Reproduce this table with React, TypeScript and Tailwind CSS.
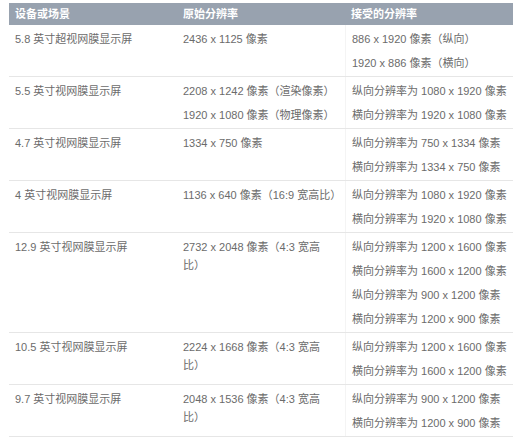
const rows = [
  {
    device: "5.8 英寸超视网膜显示屏",
    native: ["2436 x 1125 像素"],
    accepted: ["886 x 1920 像素（纵向）", "1920 x 886 像素（横向）"],
  },
  {
    device: "5.5 英寸视网膜显示屏",
    native: ["2208 x 1242 像素（渲染像素）", "1920 x 1080 像素（物理像素）"],
    accepted: ["纵向分辨率为 1080 x 1920 像素", "横向分辨率为 1920 x 1080 像素"],
    nativeAsRows: true,
  },
  {
    device: "4.7 英寸视网膜显示屏",
    native: ["1334 x 750 像素"],
    accepted: ["纵向分辨率为 750 x 1334 像素", "横向分辨率为 1334 x 750 像素"],
  },
  {
    device: "4 英寸视网膜显示屏",
    native: ["1136 x 640 像素（16:9 宽高比）"],
    accepted: ["纵向分辨率为 1080 x 1920 像素", "横向分辨率为 1920 x 1080 像素"],
  },
  {
    device: "12.9 英寸视网膜显示屏",
    native: ["2732 x 2048 像素（4:3 宽高", "比）"],
    accepted: [
      "纵向分辨率为 1200 x 1600 像素",
      "横向分辨率为 1600 x 1200 像素",
      "纵向分辨率为 900 x 1200 像素",
      "横向分辨率为 1200 x 900 像素",
    ],
  },
  {
    device: "10.5 英寸视网膜显示屏",
    native: ["2224 x 1668 像素（4:3 宽高", "比）"],
    accepted: ["纵向分辨率为 1200 x 1600 像素", "横向分辨率为 1600 x 1200 像素"],
  },
  {
    device: "9.7 英寸视网膜显示屏",
    native: ["2048 x 1536 像素（4:3 宽高", "比）"],
    accepted: ["纵向分辨率为 900 x 1200 像素", "横向分辨率为 1200 x 900 像素"],
  },
];

const font = "font-['Liberation_Sans','Noto_Sans_CJK_SC',sans-serif]";

export default function App() {
  return (
    <div className={`min-h-[443px] w-[518px] bg-white pt-[3px] pl-[9px] ${font}`}>
      <div className="w-[504px] text-[11px] text-[#6b6b6b]">
        {/* Header */}
        <div className="grid h-[22px] grid-cols-3 items-center bg-[#98a2af] font-bold text-white">
          <div className="px-[6px]">设备或场景</div>
          <div className="px-[6px]">原始分辨率</div>
          <div className="px-[6px]">接受的分辨率</div>
        </div>

        {rows.map((row) => (
          <div key={row.device} className="grid grid-cols-3 border-b border-[#e6e6e6]">
            <div className="px-[6px] pt-[5px] leading-[18px] whitespace-nowrap">{row.device}</div>
            {row.nativeAsRows ? (
              <div className="pt-[2px] pb-px">
                {row.native.map((line) => (
                  <div key={line} className="flex h-[24px] items-center px-[6px] whitespace-nowrap">
                    {line}
                  </div>
                ))}
              </div>
            ) : (
              <div className="px-[6px] pt-[5px] leading-[18px]">
                {row.native.map((line) => (
                  <div key={line} className="whitespace-nowrap">
                    {line}
                  </div>
                ))}
              </div>
            )}
            <div className="border-l border-[#f4f4f4] pt-[2px] pb-px">
              {row.accepted.map((line) => (
                <div key={line} className="flex h-[24px] items-center px-[6px] whitespace-nowrap">
                  {line}
                </div>
              ))}
            </div>
          </div>
        ))}
      </div>
    </div>
  );
}
